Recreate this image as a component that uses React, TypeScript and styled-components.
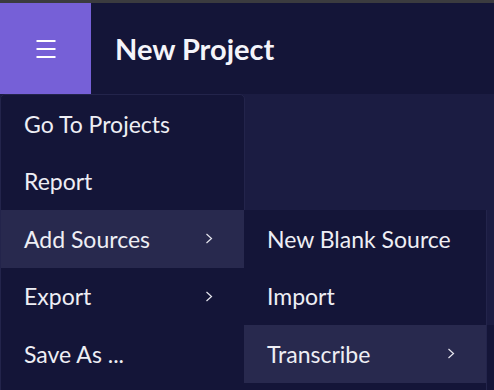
import React from "react";
import styled, { createGlobalStyle } from "styled-components";

const Global = createGlobalStyle`
  html, body {
    margin: 0;
    padding: 0;
    overflow: hidden;
    background: #1b1c42;
    font-family: Lato, "Noto Sans", sans-serif;
  }
  #root { width: 494px; height: 390px; overflow: hidden; }
`;

const Page = styled.div`
  position: relative;
  width: 494px;
  height: 390px;
  overflow: hidden;
  background: #1b1c42;
  display: flex;
  flex-direction: column;
`;

const TopStrip = styled.div`
  height: 3px;
  background: #3b3b3f;
`;

const Header = styled.header`
  display: flex;
  align-items: center;
  height: 91px;
  background: #141538;
`;

const MenuButton = styled.button`
  width: 91px;
  height: 91px;
  border: none;
  padding: 0;
  background: #7660d7;
  display: flex;
  align-items: center;
  justify-content: center;
  cursor: pointer;
`;

const Title = styled.h1`
  margin: 0 0 0 24px;
  font-size: 29px;
  font-weight: 700;
  color: #f4f4fa;
  line-height: 1;
`;

const Content = styled.main`
  position: relative;
  flex: 1;
`;

const Menu = styled.ul<{ $left: number; $top: number; $width: number }>`
  position: absolute;
  left: ${(p) => p.$left}px;
  top: ${(p) => p.$top}px;
  width: ${(p) => p.$width}px;
  margin: 0;
  padding: 0 0 12px;
  list-style: none;
  background: #141538;
  border: 1px solid #23244b;
  border-radius: 5px 5px 0 0;
  box-sizing: border-box;
`;

const SubMenu = styled(Menu)`
  border-radius: 0;
  border-top: none;
  border-left: none;
  padding-bottom: 20px;
`;

const Flyout = styled.div`
  position: absolute;
  left: 243px;
  top: 0;
  width: 200px;
  height: 120px;
  background: #141538;
`;

const Item = styled.li<{ $active?: boolean }>`
  position: relative;
  display: flex;
  align-items: center;
  justify-content: space-between;
  height: 57.5px;
  padding: 0 31px 0 23px;
  font-size: 23px;
  color: #eeeef4;
  background: ${(p) => (p.$active ? "#28294e" : "transparent")};
  white-space: nowrap;
`;

const Chevron = () => (
  <svg width="8" height="11" viewBox="0 0 8 11" fill="none">
    <polyline points="1.5,1 6.5,5.5 1.5,10" stroke="#e6e6ee" strokeWidth="1.2" />
  </svg>
);

const Hamburger = () => (
  <svg width="20" height="18" viewBox="0 0 20 18">
    <rect x="0.5" y="0" width="19" height="2" fill="#fff" />
    <rect x="0.5" y="8" width="19" height="2" fill="#fff" />
    <rect x="0.5" y="16" width="19" height="2" fill="#fff" />
  </svg>
);

export default function App() {
  return (
    <>
      <Global />
      <Page>
        <TopStrip />
        <Header>
          <MenuButton aria-label="menu">
            <Hamburger />
          </MenuButton>
          <Title>New Project</Title>
        </Header>
        <Content>
          <Menu $left={0} $top={0} $width={245}>
            <Item>Go To Projects</Item>
            <Item>Report</Item>
            <Item $active>
              Add Sources
              <Chevron />
              <SubMenu $left={243} $top={0} $width={243}>
                <Item>New Blank Source</Item>
                <Item>Import</Item>
                <Item $active>
                  Transcribe
                  <Chevron />
                  <Flyout />
                </Item>
              </SubMenu>
            </Item>
            <Item>
              Export
              <Chevron />
            </Item>
            <Item>Save As ...</Item>
          </Menu>
        </Content>
      </Page>
    </>
  );
}
